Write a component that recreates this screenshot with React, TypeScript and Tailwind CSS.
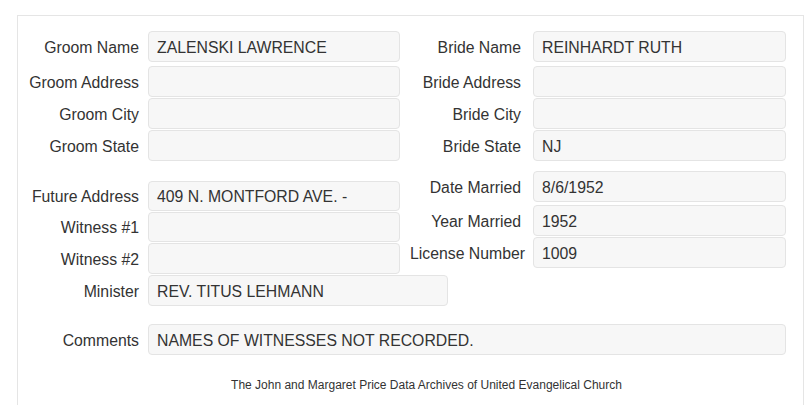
const font = { fontFamily: '"Liberation Sans", Arial, sans-serif' };

type FieldProps = {
  label: string;
  value?: string;
  labelW: string;
  inputW: string;
  labelPad: string;
  mt: string;
  h?: string;
};

function Field({ label, value, labelW, inputW, labelPad, mt, h = "h-[31px]" }: FieldProps) {
  return (
    <div className={`flex items-center ${mt}`}>
      <div className={`${labelW} ${labelPad} shrink-0 pt-[2px] text-right text-[15.8px] text-[#333] whitespace-nowrap`}>
        {label}
      </div>
      <div
        className={`${inputW} ${h} shrink-0 flex items-center pl-[8px] pt-[2px] rounded-[4px] border border-[#e4e4e4] bg-[#f7f7f7] text-[15.8px] text-[#333] whitespace-nowrap`}
      >
        {value}
      </div>
    </div>
  );
}

const L = { labelW: "w-[130px]", inputW: "w-[252px]", labelPad: "pr-[9px]" };
const R = { labelW: "w-[133px]", inputW: "w-[253px]", labelPad: "pr-[12px]" };

export default function App() {
  return (
    <div className="w-[805px] h-[405px] bg-white overflow-hidden" style={font}>
      <div className="ml-[17px] mt-[15px] w-[787px] h-[420px] border border-[#e5e5e5] pt-[15px] pr-[17px]">
        <div className="flex">
          <div className="flex flex-col">
            <Field {...L} label="Groom Name" value="ZALENSKI LAWRENCE" mt="mt-0" />
            <Field {...L} label="Groom Address" mt="mt-[4px]" />
            <Field {...L} label="Groom City" mt="mt-[1px]" />
            <Field {...L} label="Groom State" mt="mt-[1px]" />
            <Field {...L} h="h-[30px]" label="Future Address" value="409 N. MONTFORD AVE. -" mt="mt-[20px]" />
            <Field {...L} h="h-[30px]" label="Witness #1" mt="mt-[1px]" />
            <Field {...L} label="Witness #2" mt="mt-[1px]" />
          </div>
          <div className="flex flex-col">
            <Field {...R} label="Bride Name" value="REINHARDT RUTH" mt="mt-0" />
            <Field {...R} label="Bride Address" mt="mt-[4px]" />
            <Field {...R} label="Bride City" mt="mt-[1px]" />
            <Field {...R} label="Bride State" value="NJ" mt="mt-[1px]" />
            <Field {...R} label="Date Married" value="8/6/1952" mt="mt-[10px]" />
            <Field {...R} label="Year Married" value="1952" mt="mt-[3px]" />
            <Field {...R} labelPad="pr-[8px]" label="License Number" value="1009" mt="mt-[1px]" />
          </div>
        </div>
        <Field {...L} inputW="w-[300px]" label="Minister" value="REV. TITUS LEHMANN" mt="mt-[1px]" />
        <Field {...L} inputW="w-[638px]" label="Comments" value="NAMES OF WITNESSES NOT RECORDED." mt="mt-[18px]" />
        <div className="mt-[21px] pl-[49px] flex justify-center text-[12px] text-[#333]">
          The John and Margaret Price Data Archives of United Evangelical Church
        </div>
      </div>
    </div>
  );
}
